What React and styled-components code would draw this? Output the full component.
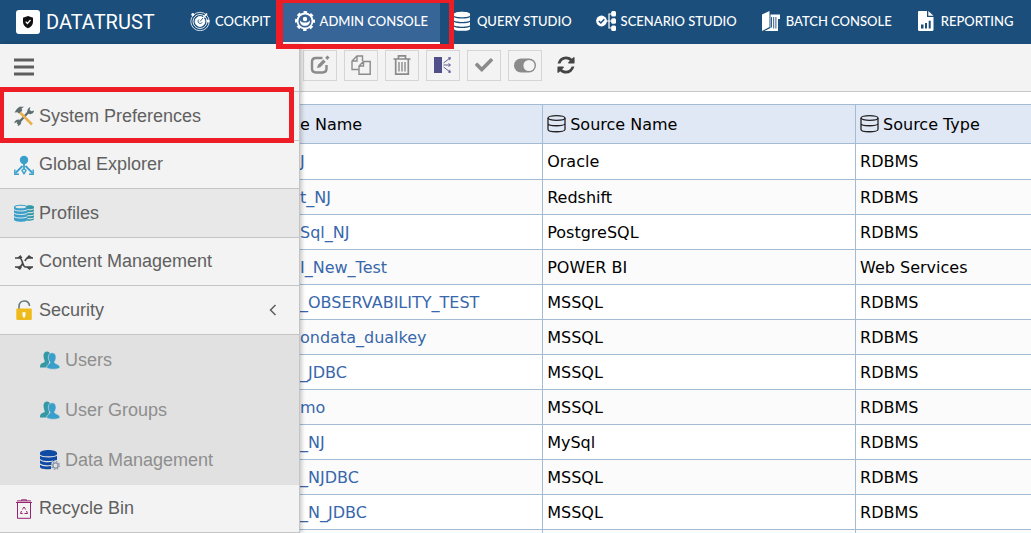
import styled, { createGlobalStyle } from "styled-components";
import { FaCheck } from "react-icons/fa";

const CockpitIcon = () => (
  <Icon viewBox="0 0 20 20" fill="none" stroke="#fff">
    <circle cx="10" cy="10.5" r="9.200" strokeWidth=".8" />
    <circle cx="10" cy="10.5" r="7" strokeWidth=".9" />
    <circle cx="10" cy="10.5" r="4.900" fill="#fff" />
    <path d="M10 10.5L17 2.5" strokeWidth="1.6" />
    <path d="M9 8.500a2.200 2.200 0 1 0 3.200 2.800M10 10.500l3-3.500" stroke="#1b4e7b" strokeWidth=".9" />
    <circle cx="2.800" cy="3.500" r="1.500" fill="#fff" stroke="none" />
    <circle cx="18" cy="10" r="1.600" fill="#fff" stroke="none" />
  </Icon>
);

const AdminIcon = () => (
  <Icon viewBox="0 0 20 20" fill="none" stroke="#fff">
    <circle cx="10" cy="10" r="7.500" strokeWidth="1.8" />
    <circle
      cx="10"
      cy="10"
      r="8.900"
      strokeWidth="2.200"
      strokeDasharray="3.500 3.490"
      strokeDashoffset="1.7"
    />
    <circle cx="10" cy="8" r="2.2" fill="#fff" stroke="none" />
    <path
      d="M5 9.2c-.3 3.200 1.800 5.600 5 5.600s5.300-2.400 5-5.600c-.8 1.500-2.300 2.400-5 2.400s-4.200-.9-5-2.400z"
      fill="#fff"
      stroke="none"
    />
  </Icon>
);

const QueryIcon = () => (
  <Icon viewBox="0 0 20 20" fill="#fff">
    <path d="M2 3c0-3 16-3 16 0v1.500c0 2.300-16 2.300-16 0z" />
    <path d="M2 6.300c2 1.700 14 1.700 16 0v3c0 2.300-16 2.300-16 0z" />
    <path d="M2 11c2 1.700 14 1.700 16 0v3c0 2.300-16 2.300-16 0z" />
    <path d="M2 15.700c2 1.700 14 1.700 16 0v2.200c0 2.600-16 2.600-16 0z" />
  </Icon>
);

const ScenarioIcon = () => (
  <Icon viewBox="0 0 20 20" fill="none" stroke="#fff">
    <circle cx="5.500" cy="10" r="5.400" fill="#fff" stroke="none" />
    <path d="M2.800 10l2 2 3.500-3.800" stroke="#1b4e7b" strokeWidth="1.500" />
    <path d="M10 10h6M16 3h-3v14h3" strokeWidth="1.200" />
    <rect x="15.200" y="0" width="4.800" height="5.600" rx="1.500" fill="#fff" stroke="none" />
    <rect x="15.200" y="7.200" width="4.800" height="5.600" rx="1.500" fill="#fff" stroke="none" />
    <rect x="15.200" y="14.400" width="4.800" height="5.600" rx="1.500" fill="#fff" stroke="none" />
  </Icon>
);

const BatchIcon = () => (
  <Icon viewBox="0 0 20 20" fill="#fff">
    <path d="M1 3.500L8.500 0v16L1 20z" />
    <path d="M9.500 3.500H19V8h-2v12H3.500l6-3z" />
    <path d="M10.500 6v10.500M12.700 6v11.500M14.900 6v11.500" stroke="#1b4e7b" strokeWidth=".9" />
  </Icon>
);

const ReportIcon = () => (
  <Icon viewBox="0 0 20 20" fill="#fff">
    <path d="M2 1.200C2 .5 2.500 0 3.200 0H11v6h6.500v12.800c0 .7-.5 1.200-1.200 1.200H3.200C2.500 20 2 19.500 2 18.800z" />
    <path d="M12.300 0l5.200 4.800h-5.200z" />
    <path d="M5 17.500v-4h2.500v4zM9 17.500v-5.500h2v5.500zM12.700 17.500V9.800h2v7.700z" fill="#1b4e7b" />
  </Icon>
);

const EditIcon = () => (
  <Icon viewBox="0 0 20 20" fill="none" stroke="#8b8b8b" strokeWidth="2.400">
    <path d="M12.500 3H6C3 3 2 4 2 7v6.500c0 3 1 4 4 4h6.500c3 0 4-1 4-4V10" />
    <path d="M7 13.200l1-3.400 5.400-5.400 2.300 2.300-5.400 5.500z" fill="#8b8b8b" stroke="none" />
    <path d="M16.200 3.900l2.300-2.400" strokeWidth="3" />
  </Icon>
);

const CopyIcon = () => (
  <Icon viewBox="0 0 20 20" fill="none" stroke="#8b8b8b" strokeWidth="1.400">
    <path d="M7.500 14.500H1V6l5-5h5.500v5M1 6h5V1" />
    <path d="M19.200 6.500v12.800H8V11l4.500-4.500zM8 11h4.500V6.500" />
  </Icon>
);

const TrashIcon = () => (
  <Icon viewBox="0 0 20 20" fill="none" stroke="#8b8b8b" strokeWidth="1.700">
    <path d="M1.500 4h17M6.500 4V.8h7V4M3.700 4.500v14.600h12.600V4.500" />
    <path d="M7 7v9.500M10 7v9.500M13 7v9.500" strokeWidth="1.400" />
  </Icon>
);

const SplitIcon = () => (
  <Icon viewBox="0 0 20 20" fill="none" stroke="#514f8a" strokeWidth=".9">
    <path d="M1 2h8v16H1z" fill="#514f8a" stroke="none" />
    <path d="M10.500 8L17 3M10.500 10H17M10.500 12l6.500 5" />
    <path d="M15 3l2.500-.4-1 2.600M15.500 8.500l2 1.500-2 1.500M15 17l2.500.4-1-2.600" />
  </Icon>
);

const ToggleIcon = () => (
  <WideIcon viewBox="0 0 22 20" fill="#8b8b8b">
    <rect x="0" y="3.500" width="22" height="14" rx="7" />
    <circle cx="15" cy="10.500" r="5.600" fill="#f3f3f3" />
  </WideIcon>
);

const RefreshIcon = () => (
  <Icon viewBox="0 0 1792 1792" fill="#444">
    <path d="M1639 1056q0 5-1 7-64 268-268 434.5t-478 166.5q-146 0-282.5-55t-243.5-157l-129 129q-19 19-45 19t-45-19-19-45v-448q0-26 19-45t45-19h448q26 0 45 19t19 45-19 45l-137 137q71 66 161 102t187 36q134 0 250-65t186-179q11-17 53-117 8-23 30-23h192q13 0 22.500 9.500t9.500 22.500zm25-800v448q0 26-19 45t-45 19h-448q-26 0-45-19t-19-45 19-45l138-138q-148-137-349-137-134 0-250 65t-186 179q-11 17-53 117-8 23-30 23h-199q-13 0-22.500-9.500t-9.500-22.500v-7q65-268 270-434.500t480-166.500q146 0 284 55.500t245 156.500l130-129q19-19 45-19t45 19 19 45z" />
  </Icon>
);

const ToolsIcon = () => (
  <Icon viewBox="0 0 20 20" fill="none">
    <path d="M3.500 18l11-12" stroke="#5d6d70" strokeWidth="2.200" />
    <path
      d="M14 7.500c-1.500-2-.6-5.500 2.400-6.500l-.8 2.800 1.700 1.500L20 4.500c0 3-3.500 4.600-6 3zM6.500 14c-2.500-1.500-6 .3-6.200 3.200l2.500-.9 1.500 1.300-.7 2.400c3-.2 4.700-3.500 2.900-6z"
      fill="#5d6d70"
    />
    <path d="M.5 6.500L2.800 3 5.500.8 10 .7 7.600 2.400l.6 2.400-3 3-1.800-1.600z" fill="#5d6d70" />
    <path d="M6 6.500l12 12" stroke="#e9b04c" strokeWidth="2.500" />
  </Icon>
);

const ExplorerIcon = () => (
  <Icon viewBox="0 0 20 20" fill="none" stroke="#3a9fca" strokeWidth="1.400">
    <circle cx="10" cy="5" r="4.200" fill="#3a9fca" stroke="none" />
    <path d="M10 9v4.500M8.500 11L1.500 18M11.500 11l7 7" strokeWidth="1.800" />
    <path d="M.8 14.500v4.700H5M19.200 14.500v4.700H15" />
    <path d="M8 15.500l2-2 2 2-2 3.200z" />
  </Icon>
);

const ProfilesIcon = () => (
  <Icon viewBox="0 0 20 20">
    <path d="M12 3.500c1-1.800 8-1.500 8 .5v12c0 1.500-4 2-7 1.500z" fill="#3599a5" />
    <path
      d="M13 6.500c2.500.5 6 .3 7-.8M13 9.500c2.500.5 6 .3 7-.8M13 12.500c2.500.5 6 .3 7-.8M13 15.500c2.500.5 6 .3 7-.8"
      stroke="#e8e8e8"
      fill="none"
    />
    <path d="M0 4c0-3 13.500-3 13.500 0v12.500c0 3-13.500 3-13.500 0z" fill="#3a9fca" />
    <ellipse cx="6.700" cy="4" rx="5.300" ry="1.300" fill="#e8e8e8" />
    <path
      d="M0 6.500c1.500 2 12 2 13.500 0M0 10c1.500 2 12 2 13.500 0M0 13.500c1.500 2 12 2 13.500 0"
      stroke="#e8e8e8"
      fill="none"
    />
  </Icon>
);

const ContentIcon = () => (
  <Icon viewBox="0 0 20 20" fill="none" stroke="#454545" strokeWidth="1.700">
    <path d="M1 6h4.500c3.500 0 2.500 9 6 9H19M1 15h4c2 0 2.800-1.500 3.500-3.500M11 9c.7-1.800 1.500-3 3.500-3H19" />
    <path
      d="M3 6l3.500-3 2 3zM12 6l3-3 4 3zM2 15l4 3 2-3zM12 15l3.500 3 3.500-3z"
      fill="#454545"
      stroke="none"
    />
  </Icon>
);

const LockIcon = () => (
  <Icon viewBox="0 0 20 20">
    <path d="M5 9V6.500C5 -.8 15.500-.8 15.500 6" stroke="#64787a" strokeWidth="1.600" fill="none" />
    <rect x="2.300" y="8.500" width="15.500" height="11.500" rx="1.200" fill="#efbb1b" />
    <path d="M8.500 12.200h3v3.800h-3zM9 16h2v1.500H9z" fill="#fff" />
  </Icon>
);

const UsersIcon = () => (
  <Icon viewBox="0 0 20 20">
    <path
      d="M3.500 5.500C3.500.3 10.500.3 10.500 5.500c0 2.500-.5 3.500-1 4.500L8 17.500H0c0-4 1.500-4 4.800-5.500 0-2-1.300-3-1.300-6.500z"
      fill="#3599a5"
    />
    <path
      d="M8.300 7C8.300 1.300 16 1.300 16 7c0 2.500-.8 3.800-1.600 5 0 2.300 5.600 1.800 5.600 6-4 1.700-9.500 1.700-13.500 0 0-3.800 3.600-3.800 3.600-6C9 11 8.300 9.500 8.300 7z"
      fill="#3a9fca"
      stroke="#e1e1e1"
      strokeWidth=".6"
    />
  </Icon>
);

const DataIcon = () => (
  <Icon viewBox="0 0 20 20">
    <path d="M0 3c0-4 17-4 17 0v7c-4 0-6 3-6 9-5 .7-11 0-11-2z" fill="#0f4aa5" />
    <path
      d="M0 5c2 2.500 15 2.500 17 0M0 9.500c2 2.500 9 2.500 13 1.500M0 14c2 2 7 2 11 1.500"
      fill="none"
      stroke="#e1e1e1"
      strokeWidth="1.200"
    />
    <circle cx="15.500" cy="15.500" r="4.600" fill="#e1e1e1" />
    <circle cx="15.500" cy="15.500" r="2.600" fill="none" stroke="#8794a8" strokeWidth="1.400" />
    <circle
      cx="15.500"
      cy="15.500"
      r="3.900"
      fill="none"
      stroke="#8794a8"
      strokeWidth="1.200"
      strokeDasharray="1.500 1.560"
    />
  </Icon>
);

const RecycleIcon = () => (
  <Icon viewBox="0 0 20 20" fill="none" stroke="#96236f">
    <path d="M2 3.500h16M7.500 2V.8h5V2M3.500 3.500v15.800h13V3.500M3 1.900h14" />
    <path d="M8.300 10.500L10 8l1.700 2.500M12.500 12l1 2.500h-3M8.700 14.500H6.500l1-2.500" />
  </Icon>
);

const DatabaseIcon = () => (
  <Icon viewBox="0 0 20 20" fill="none" stroke="#222" strokeWidth="1.300">
    <ellipse cx="9.500" cy="4" rx="8.500" ry="2.300" />
    <path d="M1 4v11.500c0 3 17 3 17 0V4M1 9.500c0 3 17 3 17 0" />
  </Icon>
);

const sources = [
  { name: "J", source: "Oracle", type: "RDBMS" },
  { name: "t_NJ", source: "Redshift", type: "RDBMS" },
  { name: "Sql_NJ", source: "PostgreSQL", type: "RDBMS" },
  { name: "I_New_Test", source: "POWER BI", type: "Web Services" },
  { name: "_OBSERVABILITY_TEST", source: "MSSQL", type: "RDBMS" },
  { name: "ondata_dualkey", source: "MSSQL", type: "RDBMS" },
  { name: "_JDBC", source: "MSSQL", type: "RDBMS" },
  { name: "mo", source: "MSSQL", type: "RDBMS" },
  { name: "_NJ", source: "MySql", type: "RDBMS" },
  { name: "_NJDBC", source: "MSSQL", type: "RDBMS" },
  { name: "_N_JDBC", source: "MSSQL", type: "RDBMS" },
];

const MenuEntry = ({ icon, label, shaded, marked, children }) => (
  <MenuItem>
    <MenuLink href="#" $shaded={shaded}>
      {icon}
      {label}
      {children}
    </MenuLink>
    {marked && <MenuMarker />}
  </MenuItem>
);

const App = () => {
  return (
    <Page>
      <GlobalStyle />
      <Header>
        <Brand href="#">
          <BrandBadge>
            <svg width="12" height="14" viewBox="0 0 12 14">
              <path d="M6 1l5 1.800V7c0 3-2 5-5 6.200C3 12 1 10 1 7V2.800z" fill="#111" />
              <path d="M3.700 6.700l1.700 1.800L8.500 5" fill="none" stroke="#fff" strokeWidth="1.200" />
            </svg>
          </BrandBadge>
          DATATRUST
        </Brand>
        <Nav>
          <NavLink href="#">
            <CockpitIcon />
            COCKPIT
          </NavLink>
          <NavLink href="#" $active>
            <AdminIcon />
            ADMIN CONSOLE
            <NavMarker />
          </NavLink>
          <NavLink href="#">
            <QueryIcon />
            QUERY STUDIO
          </NavLink>
          <NavLink href="#">
            <ScenarioIcon />
            SCENARIO STUDIO
          </NavLink>
          <NavLink href="#">
            <BatchIcon />
            BATCH CONSOLE
          </NavLink>
          <NavLink href="#">
            <ReportIcon />
            REPORTING
          </NavLink>
        </Nav>
      </Header>
      <Body>
        <Sidebar>
          <SidebarTop>
            <MenuButton aria-label="Menu">
              <svg width="20" height="18" viewBox="0 0 20 18">
                <path d="M0 2h20M0 9h20M0 16h20" stroke="#5e5e5e" strokeWidth="3" />
              </svg>
            </MenuButton>
          </SidebarTop>
          <Menu>
            <MenuEntry icon={<ToolsIcon />} label="System Preferences" marked />
            <MenuEntry icon={<ExplorerIcon />} label="Global Explorer" />
            <MenuEntry icon={<ProfilesIcon />} label="Profiles" shaded />
            <MenuEntry icon={<ContentIcon />} label="Content Management" />
            <MenuEntry icon={<LockIcon />} label="Security">
              <Chevron viewBox="0 0 8 12">
                <path d="M6.500 1L1.500 6l5 5" fill="none" stroke="#5e5e5e" strokeWidth="1.500" />
              </Chevron>
            </MenuEntry>
          </Menu>
          <SubMenu>
            <li>
              <SubLink href="#">
                <UsersIcon />
                Users
              </SubLink>
            </li>
            <li>
              <SubLink href="#">
                <UsersIcon />
                User Groups
              </SubLink>
            </li>
            <li>
              <SubLink href="#">
                <DataIcon />
                Data Management
              </SubLink>
            </li>
          </SubMenu>
          <BottomLink href="#">
            <RecycleIcon />
            Recycle Bin
          </BottomLink>
        </Sidebar>
        <Main>
          <Toolbar>
            <ToolButton aria-label="Edit">
              <EditIcon />
            </ToolButton>
            <ToolButton aria-label="Copy">
              <CopyIcon />
            </ToolButton>
            <ToolButton aria-label="Delete">
              <TrashIcon />
            </ToolButton>
            <ToolButton aria-label="Split">
              <SplitIcon />
            </ToolButton>
            <ToolButton aria-label="Validate">
              <FaCheck size={18} color="#8b8b8b" />
            </ToolButton>
            <ToolButton aria-label="Toggle">
              <ToggleIcon />
            </ToolButton>
            <ToolButton aria-label="Refresh" $plain>
              <RefreshIcon />
            </ToolButton>
          </Toolbar>
          <Content>
            <Table>
              <colgroup>
                <col style={{ width: "33.2%" }} />
                <col style={{ width: "42.8%" }} />
                <col />
              </colgroup>
              <thead>
                <tr>
                  <HeadCell>e Name</HeadCell>
                  <HeadCell>
                    <HeadLabel>
                      <DatabaseIcon />
                      Source Name
                    </HeadLabel>
                  </HeadCell>
                  <HeadCell>
                    <HeadLabel>
                      <DatabaseIcon />
                      Source Type
                    </HeadLabel>
                  </HeadCell>
                </tr>
              </thead>
              <tbody>
                {sources.map(({ name, source, type }) => (
                  <Row key={name}>
                    <Cell>
                      <SourceLink href="#">{name}</SourceLink>
                    </Cell>
                    <Cell>{source}</Cell>
                    <Cell>{type}</Cell>
                  </Row>
                ))}
                <Row>
                  <Cell />
                  <Cell />
                  <Cell />
                </Row>
              </tbody>
            </Table>
          </Content>
        </Main>
      </Body>
    </Page>
  );
};

const GlobalStyle = createGlobalStyle`
  * {
    box-sizing: border-box;
  }
  body {
    margin: 0;
    background: #fff;
    font-family: "Liberation Sans", Arial, sans-serif;
  }
`;
const Page = styled.div`
  display: flex;
  flex-direction: column;
  height: 100vh;
  overflow: hidden;
`;
const Icon = styled.svg`
  width: 20px;
  height: 20px;
  flex: none;
`;
const WideIcon = styled(Icon)`
  width: 22px;
`;
const Header = styled.header`
  display: flex;
  flex: none;
  height: 44px;
  padding-left: 16px;
  background: #1b4e7b;
`;
const Brand = styled.a`
  display: flex;
  align-items: center;
  gap: 6px;
  width: 162px;
  flex: none;
  color: #fff;
  font-family: Roboto, sans-serif;
  font-size: 20px;
  text-decoration: none;
`;
const BrandBadge = styled.span`
  display: flex;
  align-items: center;
  justify-content: center;
  width: 24px;
  height: 24px;
  border-radius: 3px;
  background: #fff;
`;
const Nav = styled.nav`
  display: flex;
`;
const NavLink = styled.a`
  position: relative;
  display: flex;
  align-items: center;
  gap: 5px;
  padding: 0 12px;
  border-bottom: 2px solid ${(props) => (props.$active ? "#fff" : "transparent")};
  background: ${(props) => (props.$active ? "#376598" : "transparent")};
  background-clip: padding-box;
  color: #fff;
  font-family: Lato, sans-serif;
  font-size: 13px;
  font-weight: 500;
  white-space: nowrap;
  text-decoration: none;
`;
const NavMarker = styled.span`
  position: absolute;
  z-index: 3;
  inset: -2px -14px -7px -7px;
  border: 5px solid #ee1c24;
  border-left-width: 7px;
`;
const Body = styled.div`
  display: flex;
  flex: 1;
  min-height: 0;
`;
const Sidebar = styled.aside`
  position: relative;
  z-index: 1;
  flex: none;
  width: 300px;
  height: 100%;
  border-right: 1px solid #c4c4c4;
  background: #f3f3f3;
  box-shadow: 2px 0 4px rgba(0, 0, 0, 0.2);
`;
const SidebarTop = styled.div`
  height: 48px;
  padding: 14px;
  border-bottom: 1px solid #c4c4c4;
`;
const MenuButton = styled.button`
  display: flex;
  padding: 0;
  border: 0;
  background: none;
`;
const Menu = styled.ul`
  margin: 0;
  padding: 0;
  list-style: none;
`;
const MenuItem = styled.li`
  position: relative;
  height: 48px;
  &:nth-child(odd) {
    height: 49px;
  }
`;
const MenuMarker = styled.span`
  position: absolute;
  inset: -5px 5px -2px 0;
  border: 5px solid #ee1c24;
  border-left-width: 4px;
  z-index: 2;
  pointer-events: none;
`;
const MenuLink = styled.a`
  display: flex;
  align-items: center;
  gap: 5px;
  height: 100%;
  padding: 0 14px;
  border-bottom: 1px solid #c4c4c4;
  background: ${(props) => (props.$shaded ? "#e8e8e8" : "#f3f3f3")};
  color: #606060;
  font-size: 18px;
  text-decoration: none;
`;
const BottomLink = styled(MenuLink)`
  height: 48px;
`;
const Chevron = styled.svg`
  width: 8px;
  height: 12px;
  margin-left: auto;
  margin-right: 8px;
`;
const SubMenu = styled(Menu)`
  background: #e1e1e1;
`;
const SubLink = styled.a`
  display: flex;
  align-items: center;
  gap: 5px;
  height: 50px;
  padding-left: 40px;
  color: #8e8e8e;
  font-size: 18px;
  text-decoration: none;
`;
const Main = styled.main`
  flex: 1;
  min-width: 0;
  overflow: hidden;
`;
const Toolbar = styled.div`
  display: flex;
  align-items: center;
  gap: 7px;
  height: 48px;
  padding: 0 3px 5px;
  border-bottom: 1px solid #c8c8c8;
  background: #f3f3f3;
`;
const ToolButton = styled.button`
  display: flex;
  align-items: center;
  justify-content: center;
  width: 34px;
  height: 31px;
  padding: 0;
  border: 1px solid ${(props) => (props.$plain ? "transparent" : "#d5d5d5")};
  background: none;
`;
const Content = styled.div`
  padding-top: 12px;
`;
const Table = styled.table`
  width: 100%;
  table-layout: fixed;
  border-collapse: collapse;
  color: #000;
  font-family: Verdana, "DejaVu Sans", sans-serif;
  font-size: 16px;
`;
const HeadCell = styled.th`
  height: 39px;
  padding: 0 4px;
  border: 1px solid #a3bcd4;
  background: #e1e8f5;
  font-weight: 400;
  text-align: left;
  &:first-child {
    padding: 0;
    border-left: 0;
  }
  &:last-child {
    border-right: 0;
  }
`;
const HeadLabel = styled.span`
  display: flex;
  align-items: center;
  gap: 3px;
`;
const Cell = styled.td`
  height: 35px;
  padding: 0 4px;
  border: 1px solid #a3bcd4;
  white-space: nowrap;
  &:first-child {
    padding: 0;
    border-left: 0;
  }
  &:last-child {
    border-right: 0;
  }
`;
const Row = styled.tr`
  background: #fff;
  &:nth-child(even) {
    background: #fbfbfb;
  }
  &:first-child ${Cell} {
    height: 36px;
  }
`;
const SourceLink = styled.a`
  color: #3867ab;
  text-decoration: none;
`;

export default App;
